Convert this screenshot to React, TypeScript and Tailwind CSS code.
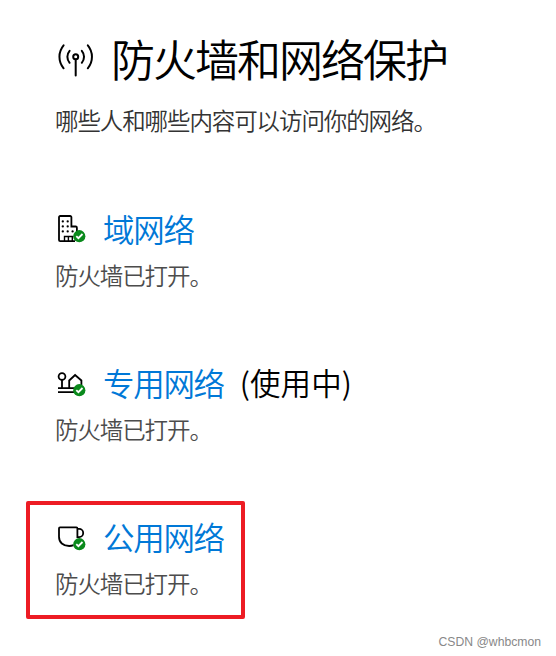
import type { ReactNode } from 'react'

interface NetworkProps {
  icon: ReactNode
  name: string
  note?: string
  highlighted?: boolean
}

function AntennaIcon() {
  return (
    <svg viewBox="0 0 40 40" className="h-10 w-10 shrink-0" fill="none" stroke="#000" strokeWidth="2" strokeLinecap="round">
      <circle cx="20.7" cy="18.7" r="2.5" />
      <path d="M20.7 21.5v16" />
      <path d="M14.600 12.800a9.200 9.200 0 0 0 0 12M26.800 12.800a9.200 9.200 0 0 1 0 12" />
      <path d="M8.600 7.300a18 18 0 0 0 0 23M32.800 7.300a18 18 0 0 1 0 23" />
    </svg>
  )
}

function CheckBadge() {
  return (
    <>
      <circle cx="24.3" cy="24.2" r="6.1" fill="#0a8a1c" stroke="none" />
      <path d="M21.3 24.1l2.1 2.100 4.100-4.200" stroke="#fff" strokeWidth="1.8" />
    </>
  )
}

function IconFrame({ children }: { children: ReactNode }) {
  return (
    <svg viewBox="0 0 32 32" className="h-8 w-8 shrink-0" fill="none" stroke="#000" strokeWidth="1.8">
      {children}
      <CheckBadge />
    </svg>
  )
}

function BuildingIcon() {
  return (
    <IconFrame>
      <path d="M20 29.200H5.200A1.200 1.200 0 0 1 4 28V5.200A1.200 1.200 0 0 1 5.200 4h10a1.200 1.200 0 0 1 1.200 1.200v9.300h4.300a1.200 1.200 0 0 1 1.200 1.200V20" />
      <path d="M9.500 29.200v-4.700h9M13.400 24.500v4.700M17.300 24.500v4.700" strokeWidth="1.400" />
      <g fill="#000" stroke="none">
        <circle cx="7.800" cy="9.400" r="1.150" />
        <circle cx="12.700" cy="9.400" r="1.150" />
        <circle cx="7.800" cy="14.400" r="1.150" />
        <circle cx="12.700" cy="14.400" r="1.150" />
        <circle cx="7.800" cy="19.400" r="1.150" />
        <circle cx="12.700" cy="19.400" r="1.150" />
        <circle cx="17.600" cy="19.400" r="1.150" />
      </g>
    </IconFrame>
  )
}

function HomeIcon() {
  return (
    <IconFrame>
      <circle cx="7" cy="10.500" r="3.400" />
      <path d="M7 13.900v8.300M3 22.200h17M3 26.200h17" />
      <path d="M14.200 22.200v-7.700l5.900-5.500 6.300 5.500V19" />
    </IconFrame>
  )
}

function CupIcon() {
  return (
    <IconFrame>
      <path d="M18.500 25.100a10 10 0 0 1-4.300.9C8.100 26 4 22.500 4 16.700V8.400a1 1 0 0 1 1-1h16.400a1 1 0 0 1 1 1V18" />
      <path d="M22.400 8.900h1.700a4.100 4.100 0 0 1 0 8.200h-1.700" />
    </IconFrame>
  )
}

function Network({ icon, name, note, highlighted = false }: NetworkProps) {
  return (
    <section className="relative h-[154px]">
      {highlighted && (
        <div className="pointer-events-none absolute -top-[19px] -left-[29px] h-[118px] w-[219px] rounded-[2px] border-4 border-[#ed1c24]" />
      )}
      <div className="flex h-8 items-center">
        {icon}
        <h2 className="ml-4 text-[31.5px] leading-8 tracking-[-1.3px] whitespace-nowrap text-[#0078d7]">{name}</h2>
        {note && <span className="ml-4 text-[30.5px] leading-8 tracking-[0.1px] whitespace-nowrap text-black">{note}</span>}
      </div>
      <p className="mt-[15px] text-[23.5px] leading-8 tracking-[-1.1px] text-[#4c4c4c]">防火墙已打开。</p>
    </section>
  )
}

export default function App() {
  return (
    <main className="flex h-[656px] w-[556px] flex-col overflow-hidden bg-white pl-[55px] font-['Noto_Sans_CJK_SC',sans-serif] font-[350]">
      <header className="pt-8">
        <div className="flex h-[52px] items-center">
          <AntennaIcon />
          <h1 className="ml-4 text-[44px] leading-[52px] tracking-[-2px] whitespace-nowrap text-black">防火墙和网络保护</h1>
        </div>
        <p className="mt-5 text-[23.5px] leading-8 tracking-[-1.1px] whitespace-nowrap text-[#333]">
          哪些人和哪些内容可以访问你的网络。
        </p>
      </header>

      <div className="mt-[76px] h-[418px]">
        <Network icon={<BuildingIcon />} name="域网络" />
        <Network icon={<HomeIcon />} name="专用网络" note="(使用中)" />
        <Network icon={<CupIcon />} name="公用网络" highlighted />
      </div>

      <footer className="flex h-6 shrink-0 items-center justify-end pr-[15px] font-['Liberation_Sans',sans-serif] text-[12.2px] font-normal text-[#888]">
        CSDN @whbcmon
      </footer>
    </main>
  )
}
